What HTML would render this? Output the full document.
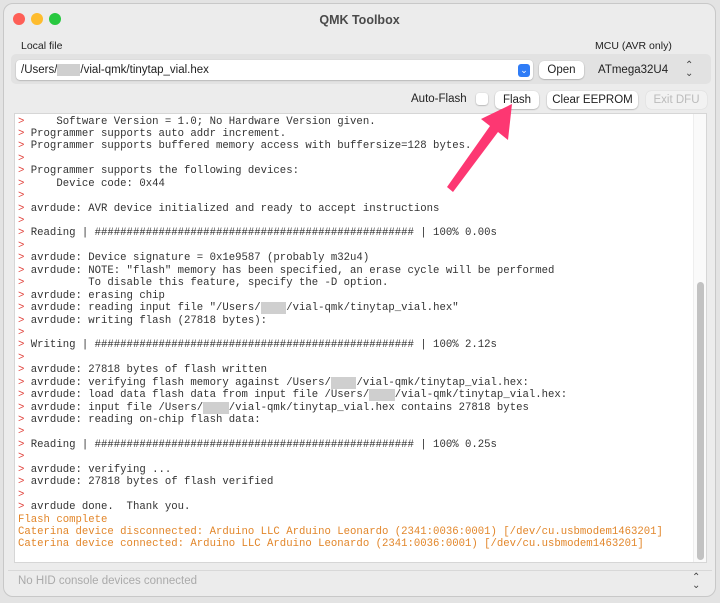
<!DOCTYPE html><html><head><style>
body{margin:0;width:720px;height:603px;background:#e3e3e3;font-family:"Liberation Sans",sans-serif;position:relative;overflow:hidden}
.win{position:absolute;left:3px;top:3px;width:713px;height:594px;background:#ececec;border-radius:10px;border:1px solid #c8c8c8;box-sizing:border-box}
.a{position:absolute}
.btn{position:absolute;background:#fff;border-radius:5px;box-shadow:0 0.5px 1.5px rgba(0,0,0,.35);font-size:11.5px;color:#222;text-align:center;line-height:18px;height:18px}
.log{position:absolute;left:14px;top:113px;width:693px;height:450px;background:#fff;border:1px solid #d6d6d6;box-sizing:border-box;overflow:hidden}
pre{margin:0;position:absolute;left:3px;top:1.5px;font-family:"Liberation Mono",monospace;font-size:10.65px;line-height:12.44px;color:#333}
.r{color:#e0403a}.o{color:#e2862a}
.bl{background:#cfcfcf;color:transparent}
</style></head><body>
<div class="win">
<div class="a" style="left:9px;top:9px;width:12px;height:12px;border-radius:6px;background:#fe5f57"></div>
<div class="a" style="left:27px;top:9px;width:12px;height:12px;border-radius:6px;background:#febc2e"></div>
<div class="a" style="left:45px;top:9px;width:12px;height:12px;border-radius:6px;background:#28c840"></div>
<div class="a" style="left:0;width:100%;top:9px;text-align:center;font-size:12.5px;font-weight:bold;color:#4a4a4a">QMK Toolbox</div>
<div class="a" style="left:17px;top:36px;font-size:10.5px;color:#222">Local file</div>
<div class="a" style="left:591px;top:36px;font-size:10.5px;color:#222">MCU (AVR only)</div>
<div class="a" style="left:7px;top:50px;width:700px;height:30px;background:#e2e2e2;border-radius:5px"></div>
<div class="a" style="left:12px;top:56px;width:517px;height:20px;background:#fff;border-radius:4px;box-shadow:0 0.5px 1.5px rgba(0,0,0,.3);font-size:11.5px;line-height:20px;color:#222;text-indent:5px">/Users/<span class="bl">xxxx</span>/vial-qmk/tinytap_vial.hex</div>
<div class="a" style="left:514px;top:60px;width:12px;height:13px;background:#2f7cf6;border-radius:3px;color:#fff;font-size:9px;text-align:center;line-height:13px">&#8964;</div>
<div class="btn" style="left:535px;top:57px;width:45px">Open</div>
<div class="a" style="left:594px;top:60px;font-size:11.5px;color:#222">ATmega32U4</div>
<div class="a" style="left:681px;top:58px;font-size:10px;color:#444;line-height:8px">&#8963;<br>&#8964;</div>
<div class="a" style="left:407px;top:89px;font-size:11.5px;color:#222">Auto-Flash</div>
<div class="a" style="left:472px;top:89px;width:12px;height:12px;background:#fff;border-radius:3px;box-shadow:0 0.5px 1.5px rgba(0,0,0,.35)"></div>
<div class="btn" style="left:491px;top:87px;width:44px">Flash</div>
<div class="btn" style="left:543px;top:87px;width:91px">Clear EEPROM</div>
<div class="btn" style="left:642px;top:87px;width:61px;color:#bbb;box-shadow:0 0 1px rgba(0,0,0,.2);background:#f2f2f2">Exit DFU</div>
</div>
<div class="log">
<div class="a" style="left:678px;top:0;width:14px;height:450px;background:#fafafa;border-left:1px solid #eee"></div>
<div class="a" style="left:682px;top:168px;width:7px;height:278px;background:#c2c2c2;border-radius:4px"></div>
<pre><span class="r">&gt;</span>     Software Version = 1.0; No Hardware Version given.
<span class="r">&gt;</span> Programmer supports auto addr increment.
<span class="r">&gt;</span> Programmer supports buffered memory access with buffersize=128 bytes.
<span class="r">&gt;</span>
<span class="r">&gt;</span> Programmer supports the following devices:
<span class="r">&gt;</span>     Device code: 0x44
<span class="r">&gt;</span>
<span class="r">&gt;</span> avrdude: AVR device initialized and ready to accept instructions
<span class="r">&gt;</span>
<span class="r">&gt;</span> Reading | ################################################## | 100% 0.00s
<span class="r">&gt;</span>
<span class="r">&gt;</span> avrdude: Device signature = 0x1e9587 (probably m32u4)
<span class="r">&gt;</span> avrdude: NOTE: "flash" memory has been specified, an erase cycle will be performed
<span class="r">&gt;</span>          To disable this feature, specify the -D option.
<span class="r">&gt;</span> avrdude: erasing chip
<span class="r">&gt;</span> avrdude: reading input file "/Users/<span class="bl">xxxx</span>/vial-qmk/tinytap_vial.hex"
<span class="r">&gt;</span> avrdude: writing flash (27818 bytes):
<span class="r">&gt;</span>
<span class="r">&gt;</span> Writing | ################################################## | 100% 2.12s
<span class="r">&gt;</span>
<span class="r">&gt;</span> avrdude: 27818 bytes of flash written
<span class="r">&gt;</span> avrdude: verifying flash memory against /Users/<span class="bl">xxxx</span>/vial-qmk/tinytap_vial.hex:
<span class="r">&gt;</span> avrdude: load data flash data from input file /Users/<span class="bl">xxxx</span>/vial-qmk/tinytap_vial.hex:
<span class="r">&gt;</span> avrdude: input file /Users/<span class="bl">xxxx</span>/vial-qmk/tinytap_vial.hex contains 27818 bytes
<span class="r">&gt;</span> avrdude: reading on-chip flash data:
<span class="r">&gt;</span>
<span class="r">&gt;</span> Reading | ################################################## | 100% 0.25s
<span class="r">&gt;</span>
<span class="r">&gt;</span> avrdude: verifying ...
<span class="r">&gt;</span> avrdude: 27818 bytes of flash verified
<span class="r">&gt;</span>
<span class="r">&gt;</span> avrdude done.  Thank you.
<span class="o">Flash complete
Caterina device disconnected: Arduino LLC Arduino Leonardo (2341:0036:0001) [/dev/cu.usbmodem1463201]
Caterina device connected: Arduino LLC Arduino Leonardo (2341:0036:0001) [/dev/cu.usbmodem1463201]</span></pre>
</div>
<div class="a" style="left:8px;top:570px;width:704px;height:1px;background:#d8d8d8"></div>
<div class="a" style="left:18px;top:575px;font-size:11.5px;color:#aaa">No HID console devices connected</div>
<div class="a" style="left:692px;top:574px;font-size:10px;color:#444;line-height:8px">&#8963;<br>&#8964;</div>
<svg class="a" style="left:0;top:0" width="720" height="603"><polygon points="512,104 508,140 498,132 453,192 447,187 490,126 481,119" fill="#fd3772"/></svg>
</body></html>
